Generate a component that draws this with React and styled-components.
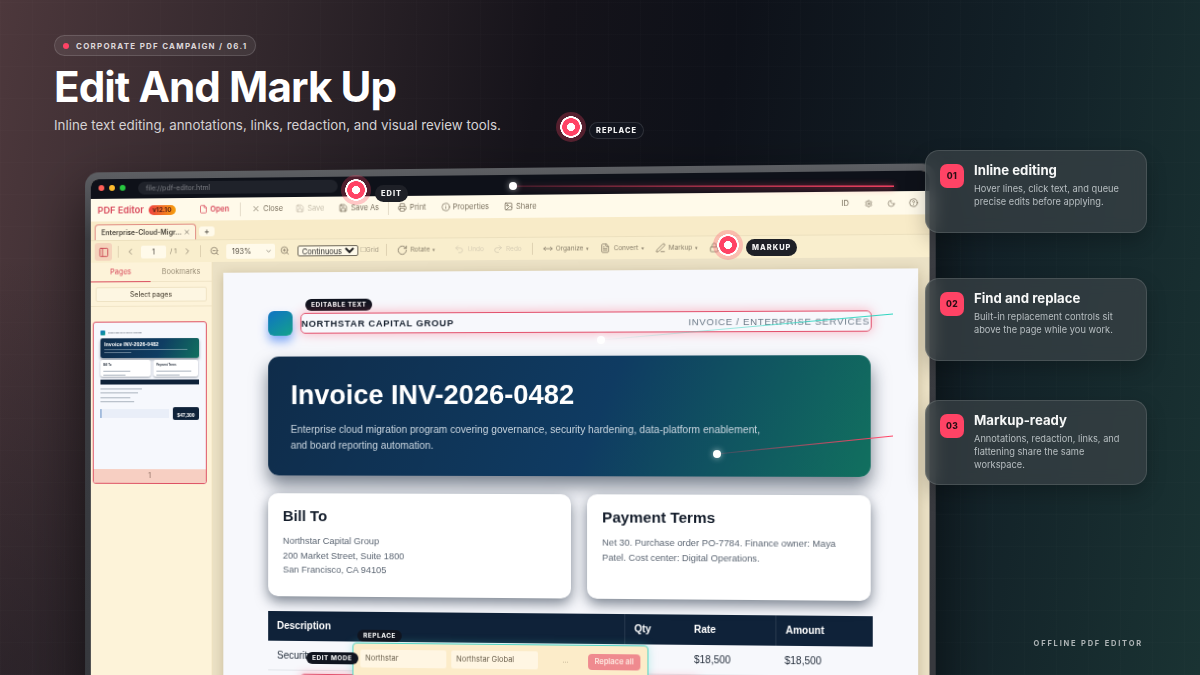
import React from "react";
import styled, { createGlobalStyle, css } from "styled-components";
import {
  ChevronLeft,
  ChevronRight,
  CircleHelp,
  File,
  FileText,
  Image,
  Info,
  Lock,
  Moon,
  MoveHorizontal,
  PanelLeft,
  PenLine,
  Printer,
  Redo2,
  RotateCw,
  Save,
  Settings,
  Undo2,
  X,
  ZoomIn,
  ZoomOut,
} from "lucide-react";

const UI = `Inter, "Liberation Sans", sans-serif`;
const DOC = `"Liberation Sans", Arial, sans-serif`;

const GlobalStyle = createGlobalStyle`
  html, body {
    margin: 0;
    padding: 0;
    background: #0d1018;
  }
  * { box-sizing: border-box; }
`;

const Stage = styled.div`
  position: relative;
  width: 1200px;
  height: 675px;
  overflow: hidden;
  padding: 35px 0 0 54px;
  font-family: ${UI};
  color: #fff;
  background:
    repeating-linear-gradient(90deg, rgba(255, 255, 255, 0.012) 0 1px, transparent 1px 32px),
    repeating-linear-gradient(0deg, rgba(255, 255, 255, 0.012) 0 1px, transparent 1px 32px),
    radial-gradient(500px 420px at 0% 100%, rgba(13, 16, 24, 0.4), transparent 100%),
    linear-gradient(100deg, #4d383c 0%, #33282d 20%, #15131a 42%, #0e1119 56%, #122027 78%, #1a3333 100%);
`;

const Header = styled.header`
  height: 100px;
`;

const Eyebrow = styled.div`
  display: flex;
  align-items: center;
  gap: 7px;
  width: fit-content;
  height: 21px;
  padding: 0 8px;
  border: 1px solid rgba(255, 255, 255, 0.14);
  border-radius: 11px;
  background: rgba(255, 255, 255, 0.07);
  font-size: 7.9px;
  font-weight: 700;
  letter-spacing: 0.165em;
  color: #ded8da;

  &::before {
    content: "";
    width: 6px;
    height: 6px;
    border-radius: 50%;
    background: #ff4365;
  }
`;

const Title = styled.h1`
  margin: 6px 0 0;
  font-size: 42.2px;
  line-height: 50px;
  font-weight: 700;
  letter-spacing: -0.022em;
`;

const Subtitle = styled.p`
  margin: 3px 0 0;
  font-size: 13.35px;
  line-height: 20px;
  color: #d5d2d4;
`;

const Body = styled.div`
  display: flex;
  align-items: flex-start;
  padding-left: 22px;
`;

const Device = styled.section`
  flex: none;
  width: 853px;
  height: 570px;
  margin-top: 33px;
  padding: 7px 6px 0;
  border-radius: 14px 14px 0 0;
  background: linear-gradient(180deg, #5d5f63, #3b3d42 12%, #36383d);
  box-shadow: 0 24px 60px rgba(0, 0, 0, 0.55);
  transform-origin: 50% 247px;
  transform: perspective(1800px) rotateY(-4.5deg);
  filter: blur(0.25px);
`;

const Screen = styled.div`
  display: flex;
  flex-direction: column;
  height: 100%;
  border-radius: 8px 8px 0 0;
  overflow: hidden;
  background: #faf0d4;
`;

const TitleBar = styled.div`
  flex: none;
  display: flex;
  align-items: center;
  gap: 5px;
  height: 20px;
  padding: 0 7px 2px 8px;
  background: #0e1119;
`;

const Light = styled.span`
  width: 6px;
  height: 6px;
  border-radius: 50%;
  background: ${(p) => p.$color};
`;

const Address = styled.div`
  width: 205px;
  height: 13px;
  margin-left: 8px;
  padding: 0 8px;
  border-radius: 7px;
  background: #1f222a;
  font-size: 7px;
  line-height: 13px;
  color: #7d7f85;
`;

const MenuBar = styled.div`
  flex: none;
  display: flex;
  align-items: center;
  height: 23px;
  padding: 0 11px 0 7px;
  background: #fffaea;
  font-size: 7.5px;
  color: #7b715f;
`;

const Brand = styled.div`
  font-size: 9.5px;
  font-weight: 600;
  color: #d8495b;
`;

const Version = styled.span`
  margin: 0 24px 0 5px;
  padding: 1px 4px;
  border-radius: 5px;
  background: linear-gradient(90deg, #ef4141, #f59e0b);
  font-size: 6.5px;
  font-weight: 700;
  color: #5a1f12;
`;

const MenuItem = styled.span`
  display: inline-flex;
  align-items: center;
  gap: 3px;
  margin-right: ${(p) => p.$gap ?? 15}px;
  font-weight: ${(p) => (p.$accent ? 600 : 400)};
  color: ${(p) => (p.$accent ? "#d8495b" : p.$off ? "#c9c2b0" : "#7b715f")};
  white-space: nowrap;
`;

const Rule = styled.i`
  flex: none;
  width: 1px;
  height: ${(p) => p.$h ?? 14}px;
  margin-right: ${(p) => p.$gap ?? 10}px;
  background: rgba(120, 100, 70, 0.2);
`;

const Spacer = styled.div`
  flex: 1;
`;

const TabRow = styled.div`
  flex: none;
  display: flex;
  align-items: flex-end;
  gap: 3px;
  height: 19px;
  padding-left: 4px;
  background: #f8ebc8;
`;

const Tab = styled.div`
  display: flex;
  align-items: center;
  justify-content: space-between;
  width: 105px;
  height: 16px;
  padding: 0 5px 0 6px;
  border: 1px solid #e08a80;
  border-bottom: none;
  border-radius: 4px 4px 0 0;
  background: #fdf5df;
  font-size: 7px;
  font-weight: 600;
  white-space: nowrap;
  color: #4a453c;
`;

const AddTab = styled.div`
  width: 16px;
  height: 10px;
  margin-bottom: 3px;
  border-radius: 3px;
  background: #fffaea;
  font-size: 9px;
  line-height: 10px;
  text-align: center;
  color: #4a453c;
`;

const ToolBar = styled.div`
  flex: none;
  display: flex;
  align-items: center;
  height: 23px;
  padding-left: 4px;
  border-top: 1px solid rgba(150, 125, 80, 0.12);
  background: #f9eecd;
  font-size: 7px;
  color: #8a806c;
`;

const PanelButton = styled.span`
  display: flex;
  align-items: center;
  justify-content: center;
  width: 18px;
  height: 18px;
  margin-right: 6px;
  border-radius: 3px;
  background: #f5d3bc;
  color: #c9434f;
`;

const ToolIcon = styled.span`
  display: inline-flex;
  margin-right: ${(p) => p.$gap ?? 6}px;
  color: #8a806c;
`;

const PageInput = styled.span`
  width: 26px;
  height: 13px;
  margin-right: 4px;
  border-radius: 2px;
  background: #fffaea;
  font-size: 7.5px;
  line-height: 13px;
  text-align: center;
  color: #4a453c;
`;

const ZoomBox = styled.span`
  display: flex;
  align-items: center;
  justify-content: space-between;
  width: 50px;
  height: 15px;
  margin-right: 5px;
  padding: 0 3px 0 6px;
  border-radius: 2px;
  background: #fffaea;
  font-size: 7.5px;
  color: #5a5346;
`;

const ViewSelect = styled.select`
  width: 62px;
  height: 11px;
  margin: 0 2px 0 0;
  padding: 0;
  border: 1px solid #6b6557;
  border-radius: 2px;
  background: #fffaea;
  font-family: ${UI};
  font-size: 7.5px;
  color: #222;
`;

const ToolLabel = styled.span`
  display: inline-flex;
  align-items: center;
  gap: 3px;
  margin-right: ${(p) => p.$gap ?? 11}px;
  white-space: nowrap;
  font-size: 6.5px;
  color: ${(p) => (p.$off ? "#d9cfb6" : "#8a806c")};

  ${(p) =>
    p.$menu &&
    css`
      &::after {
        content: "▾";
        font-size: 5px;
      }
    `}
`;

const GridToggle = styled(ToolLabel)`
  color: #a89e88;
`;

const Workspace = styled.div`
  flex: 1;
  display: flex;
  min-height: 0;
`;

const Sidebar = styled.aside`
  flex: none;
  width: 126px;
  border-right: 1px solid #eee1bf;
  background: #fdf3d9;
`;

const SideTabs = styled.div`
  display: grid;
  grid-template-columns: 62px 1fr;
  height: 20px;
  border-bottom: 1px solid #f0e4c6;
  font-size: 7.5px;
  line-height: 19px;
  text-align: center;
`;

const SideTab = styled.div`
  height: 20px;
  color: ${(p) => (p.$active ? "#d8495b" : "#9a8f78")};
  border-bottom: ${(p) => (p.$active ? "1.5px solid #d8495b" : "none")};
`;

const SelectPages = styled.div`
  height: 15px;
  margin: 5px 5px 0 5px;
  border: 1px solid #efe3c4;
  border-radius: 2px;
  background: #fdf6e2;
  font-size: 7px;
  font-weight: 500;
  line-height: 13px;
  text-align: center;
  color: #5b5344;
`;

const SideDivider = styled.div`
  height: 1px;
  margin-top: 4px;
  background: #f0e4c6;
`;

const Thumb = styled.div`
  display: flex;
  flex-direction: column;
  width: 118px;
  height: 165px;
  margin: 15px 0 0 2px;
  border: 1.5px solid #dd4f62;
  border-radius: 3px;
  overflow: hidden;
  background: #f6f8fd;
`;

const ThumbPage = styled.div`
  flex: 1;
  padding: 7px 7px 0 7px;
  font-family: ${DOC};
`;

const ThumbHead = styled.div`
  display: flex;
  align-items: center;
  gap: 3px;
  height: 6px;
  font-size: 2.4px;
  font-weight: 700;
  color: #3a4554;

  &::before {
    content: "";
    width: 5px;
    height: 5px;
    border-radius: 1px;
    background: linear-gradient(145deg, #0e72c4, #14a38b);
  }
`;

const ThumbHero = styled.div`
  height: 20px;
  margin-top: 3px;
  padding: 3px 4px;
  border-radius: 2px;
  background: linear-gradient(115deg, #0f2c4a, #0f3d63 60%, #11705f);
  box-shadow: 0 2px 3px rgba(15, 30, 50, 0.45);
  font-size: 5.4px;
  font-weight: 700;
  color: #fff;
`;

const ThumbHeroLine = styled.div`
  width: ${(p) => p.$w}%;
  height: 1px;
  margin-top: 2px;
  background: rgba(200, 215, 225, 0.45);
`;

const ThumbCards = styled.div`
  display: grid;
  grid-template-columns: 52px 46px;
  gap: 3px;
  margin-top: 2px;
`;

const ThumbCard = styled.div`
  height: 17px;
  padding: 3px;
  border-radius: 2px;
  background: #fff;
  box-shadow: 0 1px 2px rgba(15, 30, 50, 0.4);
  font-size: 2.8px;
  font-weight: 700;
  color: #1b2533;
`;

const ThumbTableHead = styled.div`
  height: 5px;
  margin-top: 3px;
  background: #0f2239;
`;

const ThumbLine = styled.div`
  height: 1px;
  margin-top: 3.6px;
  width: ${(p) => p.$w}%;
  background: #a9b2bd;
`;

const ThumbFoot = styled.div`
  display: flex;
  gap: 4px;
  margin-top: 5px;
`;

const ThumbNote = styled.div`
  flex: 1;
  height: 9px;
  margin-top: 2px;
  border-left: 1px solid #5a86c0;
  background: #e9eef8;
`;

const ThumbTotal = styled.div`
  width: 27px;
  height: 13px;
  padding-top: 5px;
  border-radius: 2px;
  background: #0f2239;
  font-size: 5px;
  font-weight: 700;
  text-align: center;
  color: #fff;
`;

const ThumbNumber = styled.div`
  flex: none;
  height: 14px;
  background: #f7cfc2;
  font-size: 7px;
  line-height: 14px;
  text-align: center;
  color: #8a6a5e;
`;

const PagesArea = styled.main`
  flex: 1;
  min-width: 0;
  padding: 11px 11px 0 11px;
  background: #ebe1c5;
`;

const Page = styled.article`
  position: relative;
  height: 600px;
  padding: 38px 46px 0 46px;
  background: #f7f8fc;
  font-family: ${DOC};
  box-shadow: 0 2px 10px rgba(90, 70, 30, 0.25);
`;

const PageHead = styled.div`
  position: relative;
  display: flex;
  align-items: center;
  height: 26px;
`;

const Logo = styled.div`
  flex: none;
  width: 25px;
  height: 25px;
  margin-right: 9px;
  border-radius: 6px;
  background: linear-gradient(145deg, #0e72c4, #14a38b);
  box-shadow: 0 6px 10px rgba(40, 110, 240, 0.55);
`;

const Company = styled.div`
  flex: 1;
  font-size: 9.5px;
  font-weight: 700;
  letter-spacing: 0.07em;
  color: #16202e;
`;

const DocKind = styled.div`
  font-size: 9.5px;
  letter-spacing: 0.07em;
  color: #6c7a88;
  margin-right: 1px;
`;

const EditOutline = styled.div`
  position: absolute;
  left: 33px;
  right: -1px;
  top: 3px;
  bottom: 2px;
  border: 1px solid #e2506c;
  border-radius: 5px;
  box-shadow: 0 0 12px rgba(255, 70, 100, 0.4);
  pointer-events: none;
`;

const DarkTag = styled.span`
  position: absolute;
  left: ${(p) => p.$x}px;
  top: ${(p) => p.$y}px;
  padding: 0 6px;
  height: 12px;
  border-radius: 6px;
  background: #10141f;
  font-family: ${UI};
  font-size: 6.5px;
  font-weight: 700;
  line-height: 12px;
  letter-spacing: 0.08em;
  white-space: nowrap;
  color: #fff;
`;

const Hero = styled.div`
  height: 120px;
  margin-top: 21px;
  padding: 21px 23px 0;
  border-radius: 11px;
  background: linear-gradient(112deg, #0f2c4a, #0f3b62 55%, #11705f);
  box-shadow: 0 10px 18px rgba(15, 30, 50, 0.55);
  color: #fff;
`;

const HeroTitle = styled.h2`
  margin: 0;
  font-size: 27.4px;
  line-height: 36px;
  font-weight: 700;
`;

const HeroText = styled.p`
  margin: 9px 0 0;
  max-width: 480px;
  font-size: 10.2px;
  line-height: 15.5px;
  color: #c9d5df;
`;

const InfoGrid = styled.div`
  display: grid;
  grid-template-columns: 306px 279px;
  gap: 16px;
  margin-top: 18px;
`;

const InfoCard = styled.div`
  height: 104px;
  padding: 14px 15px 0 15px;
  border-radius: 10px;
  background: #fff;
  box-shadow: 0 5px 13px rgba(15, 30, 50, 0.55);
`;

const InfoTitle = styled.h3`
  margin: 0;
  font-size: 15.2px;
  line-height: 18px;
  font-weight: 700;
  color: #131c2a;
`;

const InfoText = styled.p`
  margin: 9px 0 0;
  font-size: 9.3px;
  line-height: 14.6px;
  color: #5c6673;
`;

const Table = styled.div`
  margin-top: 15px;
  width: 603px;
  font-size: 10px;
`;

const TableRow = styled.div`
  display: grid;
  grid-template-columns: 359px 57px 92px 95px;
  align-items: center;
  height: 30px;
  background: ${(p) => (p.$head ? "#0f2239" : "transparent")};
  border-bottom: 1px solid ${(p) => (p.$head ? "transparent" : "#e2e5ea")};
  font-weight: ${(p) => (p.$head ? 700 : 400)};
  color: ${(p) => (p.$head ? "#fff" : "#1f2937")};
`;

const Cell = styled.div`
  height: 100%;
  padding-left: ${(p) => p.$pad ?? 9}px;
  line-height: 30px;
  border-left: ${(p) => (p.$line ? "1px solid rgba(255,255,255,.1)" : "none")};
`;

const ReplaceBar = styled.div`
  position: absolute;
  left: 132px;
  top: 373px;
  display: flex;
  align-items: flex-start;
  width: 297px;
  height: 36px;
  padding: 6px 7px 0;
  border: 1px solid #55d6c6;
  border-radius: 4px;
  background: #fcecc9;
  box-shadow: 0 0 8px rgba(70, 210, 195, 0.35);
  font-family: ${UI};
`;

const ReplaceInput = styled.div`
  width: 87px;
  height: 18px;
  margin-right: 5px;
  padding-left: 5px;
  border-radius: 2px;
  background: #fff6e3;
  font-size: 7.5px;
  line-height: 18px;
  color: #6a5f4c;
`;

const Ellipsis = styled.span`
  flex: 1;
  font-size: 7px;
  line-height: 18px;
  text-align: center;
  color: #a89a80;
`;

const ReplaceAll = styled.div`
  width: 52px;
  height: 16px;
  margin-top: 2px;
  border-radius: 4px;
  background: #ef8a8f;
  font-size: 7.5px;
  font-weight: 600;
  line-height: 16px;
  text-align: center;
  color: #fde8e0;
`;

const RedBox = styled.div`
  position: absolute;
  left: 79px;
  top: 405px;
  width: 400px;
  height: 30px;
  border: 1px solid #e2506c;
  border-radius: 4px;
  box-shadow: 0 0 10px rgba(255, 70, 100, 0.4);
  pointer-events: none;
`;

const Aside = styled.aside`
  flex: none;
  position: relative;
  display: flex;
  flex-direction: column;
  width: 222px;
  height: 498px;
  margin: 15px 0 0 -4px;
`;

const FeatureCard = styled.div`
  display: flex;
  gap: 10px;
  height: ${(p) => p.$h}px;
  margin-top: ${(p) => p.$top}px;
  padding: 13px 14px 0;
  border: 1px solid rgba(255, 255, 255, 0.12);
  border-radius: 14px;
  background: rgba(58, 66, 70, 0.72);
  backdrop-filter: blur(8px);
  box-shadow: 0 8px 20px rgba(0, 0, 0, 0.22);
`;

const Badge = styled.div`
  flex: none;
  width: 24px;
  height: 24px;
  border-radius: 7px;
  background: #ff4365;
  font-size: 8.5px;
  font-weight: 800;
  line-height: 24px;
  letter-spacing: 0.04em;
  text-align: center;
  color: #2a0d14;
`;

const FeatureTitle = styled.h4`
  margin: -3px 0 3px;
  font-size: 13.2px;
  line-height: 18px;
  font-weight: 700;
  color: #f6f7f7;
`;

const FeatureText = styled.p`
  margin: 0;
  max-width: 152px;
  font-size: 9.25px;
  line-height: 13.2px;
  color: #b8bfc2;
`;

const Footer = styled.div`
  margin-top: auto;
  padding-right: 4px;
  font-size: 7.5px;
  font-weight: 700;
  letter-spacing: 0.24em;
  text-align: right;
  color: #aeb4b6;
`;

const Wires = styled.svg`
  position: absolute;
  inset: 0;
  width: 1200px;
  height: 675px;
  pointer-events: none;
`;

const Pin = styled.span`
  position: absolute;
  left: ${(p) => p.$x - 15}px;
  top: ${(p) => p.$y - 15}px;
  width: 30px;
  height: 30px;
  border-radius: 50%;
  background: radial-gradient(circle, #fff 0 3.8px, #ff4365 4.2px 8.6px, #fff 9px 10.6px, rgba(255, 67, 101, 0.28) 11px);
`;

const PinLabel = styled.span`
  position: absolute;
  left: ${(p) => p.$x}px;
  top: ${(p) => p.$y}px;
  height: 17px;
  padding: 0 ${(p) => p.$pad ?? 5}px;
  border: 1px solid ${(p) => (p.$outline ? "rgba(255,255,255,.12)" : "transparent")};
  border-radius: 9px;
  background: ${(p) => (p.$outline ? "#12151e" : "#1e2027")};
  font-size: 7.4px;
  font-weight: 800;
  line-height: 15px;
  letter-spacing: 0.14em;
  color: #f3f3f3;
`;

const Dot = styled.span`
  position: absolute;
  left: ${(p) => p.$x - 4}px;
  top: ${(p) => p.$y - 4}px;
  width: 8px;
  height: 8px;
  border-radius: 50%;
  background: #fff;
  box-shadow: 0 0 6px rgba(255, 255, 255, 0.6);
`;

const features = [
  { n: "01", h: 83, top: 0, title: "Inline editing", text: "Hover lines, click text, and queue precise edits before applying." },
  { n: "02", h: 83, top: 45, title: "Find and replace", text: "Built-in replacement controls sit above the page while you work." },
  { n: "03", h: 85, top: 39, title: "Markup-ready", text: "Annotations, redaction, links, and flattening share the same workspace." },
];

const Menu = () => (
  <MenuBar>
    <Brand>PDF Editor</Brand>
    <Version>v12.10</Version>
    <MenuItem $accent $gap={11}><File size={9} />Open</MenuItem>
    <Rule $gap={11} />
    <MenuItem $gap={13}><X size={9} />Close</MenuItem>
    <MenuItem $off><Save size={9} />Save</MenuItem>
    <MenuItem $gap={9}><Save size={9} />Save As</MenuItem>
    <Rule $gap={9} />
    <MenuItem><Printer size={9} />Print</MenuItem>
    <MenuItem><Info size={9} />Properties</MenuItem>
    <MenuItem><Image size={9} />Share</MenuItem>
    <Spacer />
    <MenuItem>ID</MenuItem>
    <MenuItem $gap={14}><Settings size={8} /></MenuItem>
    <MenuItem $gap={13}><Moon size={8} /></MenuItem>
    <MenuItem $gap={0}><CircleHelp size={9} /></MenuItem>
  </MenuBar>
);

const Tools = () => (
  <ToolBar>
    <PanelButton><PanelLeft size={11} /></PanelButton>
    <Rule $h={12} $gap={7} />
    <ToolIcon $gap={6}><ChevronLeft size={10} /></ToolIcon>
    <PageInput>1</PageInput>
    <ToolLabel $gap={6}>/ 1</ToolLabel>
    <ToolIcon $gap={8}><ChevronRight size={10} /></ToolIcon>
    <Rule $h={12} $gap={9} />
    <ToolIcon $gap={7}><ZoomOut size={10} /></ToolIcon>
    <ZoomBox>193%<ChevronRight size={7} style={{ transform: "rotate(90deg)" }} /></ZoomBox>
    <ToolIcon $gap={8}><ZoomIn size={10} /></ToolIcon>
    <ViewSelect defaultValue="Continuous">
      <option>Continuous</option>
    </ViewSelect>
    <GridToggle $gap={7}>☐Grid</GridToggle>
    <Rule $h={12} />
    <ToolLabel $menu $gap={19}><RotateCw size={11} />Rotate</ToolLabel>
    <ToolLabel $off $gap={9}><Undo2 size={10} />Undo</ToolLabel>
    <ToolLabel $off $gap={10}><Redo2 size={10} />Redo</ToolLabel>
    <Rule $h={12} />
    <ToolLabel $menu><MoveHorizontal size={10} />Organize</ToolLabel>
    <ToolLabel $menu><FileText size={10} />Convert</ToolLabel>
    <ToolLabel $menu><PenLine size={10} />Markup</ToolLabel>
    <ToolIcon><Lock size={10} /></ToolIcon>
  </ToolBar>
);

const Pages = () => (
  <Sidebar>
    <SideTabs>
      <SideTab $active>Pages</SideTab>
      <SideTab>Bookmarks</SideTab>
    </SideTabs>
    <SelectPages>Select pages</SelectPages>
    <SideDivider />
    <Thumb>
      <ThumbPage>
        <ThumbHead>NORTHSTAR CAPITAL GROUP</ThumbHead>
        <ThumbHero>
          Invoice INV-2026-0482
          <ThumbHeroLine $w={92} />
          <ThumbHeroLine $w={30} />
        </ThumbHero>
        <ThumbCards>
          <ThumbCard>
            Bill To
            <ThumbLine $w={60} />
            <ThumbLine $w={50} />
          </ThumbCard>
          <ThumbCard>
            Payment Terms
            <ThumbLine $w={90} />
            <ThumbLine $w={60} />
          </ThumbCard>
        </ThumbCards>
        <ThumbTableHead />
        <ThumbLine $w={42} />
        <ThumbLine $w={38} />
        <ThumbLine $w={30} />
        <ThumbLine $w={34} />
        <ThumbFoot>
          <ThumbNote />
          <ThumbTotal>$47,300</ThumbTotal>
        </ThumbFoot>
      </ThumbPage>
      <ThumbNumber>1</ThumbNumber>
    </Thumb>
  </Sidebar>
);

const Invoice = () => (
  <Page>
    <DarkTag $x={84} $y={27}>EDITABLE TEXT</DarkTag>
    <PageHead>
      <Logo />
      <Company>NORTHSTAR CAPITAL GROUP</Company>
      <DocKind>INVOICE / ENTERPRISE SERVICES</DocKind>
      <EditOutline />
    </PageHead>
    <Hero>
      <HeroTitle>Invoice INV-2026-0482</HeroTitle>
      <HeroText>
        Enterprise cloud migration program covering governance, security hardening, data-platform enablement, and board reporting automation.
      </HeroText>
    </Hero>
    <InfoGrid>
      <InfoCard>
        <InfoTitle>Bill To</InfoTitle>
        <InfoText>
          Northstar Capital Group
          <br />
          200 Market Street, Suite 1800
          <br />
          San Francisco, CA 94105
        </InfoText>
      </InfoCard>
      <InfoCard>
        <InfoTitle>Payment Terms</InfoTitle>
        <InfoText>Net 30. Purchase order PO-7784. Finance owner: Maya Patel. Cost center: Digital Operations.</InfoText>
      </InfoCard>
    </InfoGrid>
    <Table>
      <TableRow $head>
        <Cell>Description</Cell>
        <Cell $line>Qty</Cell>
        <Cell $pad={12}>Rate</Cell>
        <Cell $line>Amount</Cell>
      </TableRow>
      <TableRow>
        <Cell>Security</Cell>
        <Cell>1</Cell>
        <Cell $pad={12}>$18,500</Cell>
        <Cell>$18,500</Cell>
      </TableRow>
    </Table>
    <RedBox />
    <ReplaceBar>
      <ReplaceInput>Northstar</ReplaceInput>
      <ReplaceInput>Northstar Global</ReplaceInput>
      <Ellipsis>...</Ellipsis>
      <ReplaceAll>Replace all</ReplaceAll>
    </ReplaceBar>
    <DarkTag $x={137} $y={360}>REPLACE</DarkTag>
    <DarkTag $x={85} $y={383}>EDIT MODE</DarkTag>
  </Page>
);

export default function App() {
  return (
    <Stage>
      <GlobalStyle />
      <Header>
        <Eyebrow>CORPORATE PDF CAMPAIGN / 06.1</Eyebrow>
        <Title>Edit And Mark Up</Title>
        <Subtitle>Inline text editing, annotations, links, redaction, and visual review tools.</Subtitle>
      </Header>
      <Body>
        <Device>
          <Screen>
            <TitleBar>
              <Light $color="#ff5f57" />
              <Light $color="#febc2e" />
              <Light $color="#28c840" />
              <Address>file://pdf-editor.html</Address>
            </TitleBar>
            <Menu />
            <TabRow>
              <Tab>
                Enterprise-Cloud-Migr...
                <X size={7} />
              </Tab>
              <AddTab>+</AddTab>
            </TabRow>
            <Tools />
            <Workspace>
              <Pages />
              <PagesArea>
                <Invoice />
              </PagesArea>
            </Workspace>
          </Screen>
        </Device>
        <Aside>
          {features.map((f) => (
            <FeatureCard key={f.n} $h={f.h} $top={f.top}>
              <Badge>{f.n}</Badge>
              <div>
                <FeatureTitle>{f.title}</FeatureTitle>
                <FeatureText>{f.text}</FeatureText>
              </div>
            </FeatureCard>
          ))}
          <Footer>OFFLINE PDF EDITOR</Footer>
        </Aside>
      </Body>
      <Wires viewBox="0 0 1200 675">
        <defs>
          <linearGradient id="wireRed" x1="0" x2="1" y1="0" y2="0">
            <stop offset="0" stopColor="#ff4365" stopOpacity="0.2" />
            <stop offset="1" stopColor="#ff4365" />
          </linearGradient>
          <linearGradient id="wireTeal" gradientUnits="userSpaceOnUse" x1="601" x2="893" y1="340" y2="314">
            <stop offset="0" stopColor="#2dd4bf" stopOpacity="0" />
            <stop offset="1" stopColor="#2dd4bf" />
          </linearGradient>
          <linearGradient id="wirePink" gradientUnits="userSpaceOnUse" x1="717" x2="893" y1="454" y2="436">
            <stop offset="0" stopColor="#ff4365" stopOpacity="0.15" />
            <stop offset="1" stopColor="#ff4365" />
          </linearGradient>
          <filter id="wireGlow" x="-5%" y="-800%" width="110%" height="1700%">
            <feGaussianBlur stdDeviation="3" />
          </filter>
        </defs>
        <rect x="513" y="185" width="381" height="4" fill="url(#wireRed)" opacity="0.5" filter="url(#wireGlow)" />
        <rect x="513" y="185.5" width="381" height="1.4" fill="url(#wireRed)" />
        <line x1="601" y1="340" x2="893" y2="314" stroke="url(#wireTeal)" strokeWidth="1.2" />
        <line x1="717" y1="454" x2="893" y2="436" stroke="url(#wirePink)" strokeWidth="1.2" />
      </Wires>
      <Dot $x={513} $y={186} />
      <Dot $x={601} $y={340} />
      <Dot $x={717} $y={454} />
      <Pin $x={571} $y={127} />
      <PinLabel $x={589} $y={122} $outline $pad={6}>REPLACE</PinLabel>
      <Pin $x={356} $y={190} />
      <PinLabel $x={375} $y={185}>EDIT</PinLabel>
      <Pin $x={728} $y={245} />
      <PinLabel $x={746} $y={239}>MARKUP</PinLabel>
    </Stage>
  );
}
